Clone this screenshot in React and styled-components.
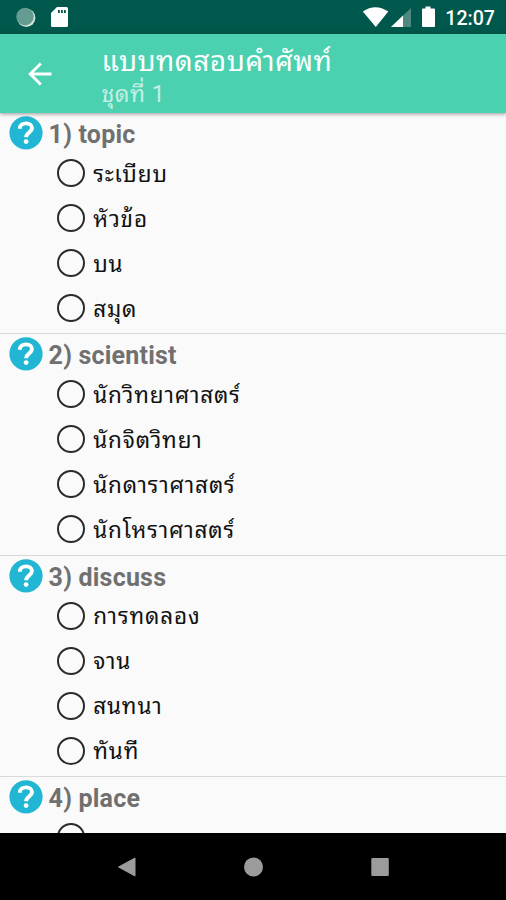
import React from "react";
import styled, { createGlobalStyle } from "styled-components";

const GlobalStyle = createGlobalStyle`
  * {
    box-sizing: border-box;
  }
  body {
    margin: 0;
    font-family: Roboto, "Noto Sans Thai Looped", "Noto Looped Thai", Loma, Garuda, Waree, "Noto Sans Thai", "Noto Sans", sans-serif;
    background: #fafafa;
  }
`;

const Screen = styled.div`
  width: 506px;
  height: 900px;
  display: flex;
  flex-direction: column;
  overflow: hidden;
`;
const StatusBar = styled.div`
  flex: none;
  height: 34px;
  padding: 0 11px 0 15px;
  display: flex;
  justify-content: space-between;
  background: #00574b;
  color: #fff;
`;
const StatusGroup = styled.div`
  display: flex;
  align-items: center;
`;
const Clock = styled.span`
  font-size: 19.6px;
  font-weight: 500;
  line-height: 34px;
  margin: 3px 0 0 7px;
`;
const AppBar = styled.header`
  flex: none;
  position: relative;
  height: 79px;
  display: flex;
  background: #4bd1b0;
  color: #fff;
  box-shadow: 0 1px 4px rgba(0, 0, 0, 0.4);
`;
const BackButton = styled.div`
  width: 101.5px;
  padding: 28px 0 0 28px;
  svg {
    display: block;
  }
`;
const Titles = styled.div`
  white-space: nowrap;
`;
const Title = styled.h1`
  margin: 10px 0 0;
  font-size: 28px;
  font-weight: 400;
  line-height: 36px;
  letter-spacing: 0.5px;
`;
const Subtitle = styled.div`
  font-size: 23px;
  line-height: 30px;
  letter-spacing: 0.5px;
  color: #c3efe3;
`;
const List = styled.main`
  flex: 1;
  min-height: 0;
  overflow: hidden;
  background: #fafafa;
`;
const Question = styled.section`
  height: 221.5px;
  border-bottom: 1px solid #dadada;
  &:first-child {
    height: 221px;
  }
`;
const QuestionHead = styled.div`
  height: 37.8px;
  padding: 3px 0 0 8.6px;
  display: flex;
  svg {
    flex: none;
    display: block;
  }
`;
const Word = styled.h2`
  margin: 0 0 0 6px;
  font-size: 25px;
  font-weight: 700;
  line-height: 38px;
  letter-spacing: 0.2px;
  color: #707070;
`;
const Option = styled.label`
  height: 45.05px;
  padding-left: 56.6px;
  display: flex;
  align-items: center;
`;
const Radio = styled.span`
  flex: none;
  width: 28px;
  height: 28px;
  border: 2.4px solid #2b2b2b;
  border-radius: 50%;
`;
const OptionText = styled.span`
  margin: 1px 0 0 8.6px;
  font-size: 22.5px;
  line-height: 44px;
  letter-spacing: 0.85px;
  color: #111;
  white-space: nowrap;
`;
const NavBar = styled.nav`
  flex: none;
  height: 67px;
  display: flex;
  align-items: center;
  justify-content: center;
  gap: 107px;
  background: #000;
`;

const questions = [
  { word: "topic", options: ["ระเบียบ", "หัวข้อ", "บน", "สมุด"] },
  {
    word: "scientist",
    options: ["นักวิทยาศาสตร์", "นักจิตวิทยา", "นักดาราศาสตร์", "นักโหราศาสตร์"],
  },
  { word: "discuss", options: ["การทดลอง", "จาน", "สนทนา", "ทันที"] },
  { word: "place", options: [""] },
];

const HelpIcon = () => (
  <svg width="34" height="34" viewBox="0 0 34 34">
    <circle cx="17" cy="16.8" r="16.6" fill="#21b6d3" />
    <path
      d="M10.800 12.800C10.800 9.300 13.500 7.400 17 7.400c3.600 0 6 1.900 6 4.700 0 4.300-5.900 4.600-5.900 9.200"
      fill="none"
      stroke="#fff"
      strokeWidth="3.9"
    />
    <circle cx="17.1" cy="25.6" r="2.4" fill="#fff" />
  </svg>
);

const App = () => {
  return (
    <Screen>
      <GlobalStyle />
      <StatusBar>
        <StatusGroup>
          <svg width="56" height="34" viewBox="0 0 56 34">
            <circle cx="11.2" cy="17.8" r="9.2" fill="#d5e3e0" />
            <circle cx="10" cy="16.6" r="8.8" fill="#649c91" />
            <path
              d="M42 7h9.500q1.500 0 1.500 1.500V25.500q0 1.500-1.500 1.500h-14q-1.500 0-1.500-1.500V13z"
              fill="#fff"
            />
            <path d="M43 10h1.800v3H43zM46 10h1.800v3H46zM49 10h1.800v3H49z" fill="#00574b" />
          </svg>
        </StatusGroup>
        <StatusGroup>
          <svg width="76" height="34" viewBox="0 0 76 34">
            <path d="M.8 11.500Q13.300 3 26.300 11.500L13.800 27z" fill="#fff" />
            <path d="M49 8v19H29z" fill="#4d897f" />
            <path d="M41 15.600V27H29z" fill="#fff" />
            <path
              d="M63.500 6.500h5V8.500H72q1 0 1 1V26q0 1-1 1H61q-1 0-1-1V9.500q0-1 1-1h2.500z"
              fill="#fff"
            />
          </svg>
          <Clock>12:07</Clock>
        </StatusGroup>
      </StatusBar>
      <AppBar>
        <BackButton>
          <svg width="24" height="24" viewBox="0 0 24 24">
            <path
              d="M12.800 1.500L2.200 12l10.600 10.500M2.200 12H23.500"
              fill="none"
              stroke="#fff"
              strokeWidth="2.900"
            />
          </svg>
        </BackButton>
        <Titles>
          <Title>แบบทดสอบคำศัพท์</Title>
          <Subtitle>ชุดที่ 1</Subtitle>
        </Titles>
      </AppBar>
      <List>
        {questions.map((question, index) => (
          <Question key={question.word}>
            <QuestionHead>
              <HelpIcon />
              <Word>
                {index + 1}) {question.word}
              </Word>
            </QuestionHead>
            {question.options.map((option, i) => (
              <Option key={i}>
                <Radio />
                <OptionText>{option}</OptionText>
              </Option>
            ))}
          </Question>
        ))}
      </List>
      <NavBar>
        <svg width="20" height="20" viewBox="0 0 20 20">
          <path d="M19 1v18L2.500 10z" fill="#9b9b9b" stroke="#9b9b9b" strokeLinejoin="round" />
        </svg>
        <svg width="20" height="20" viewBox="0 0 20 20">
          <circle cx="10.500" cy="10" r="9.500" fill="#9b9b9b" />
        </svg>
        <svg width="20" height="20" viewBox="0 0 20 20">
          <rect x="1.300" y="1" width="17.500" height="18" rx="1" fill="#9b9b9b" />
        </svg>
      </NavBar>
    </Screen>
  );
};

export default App;
